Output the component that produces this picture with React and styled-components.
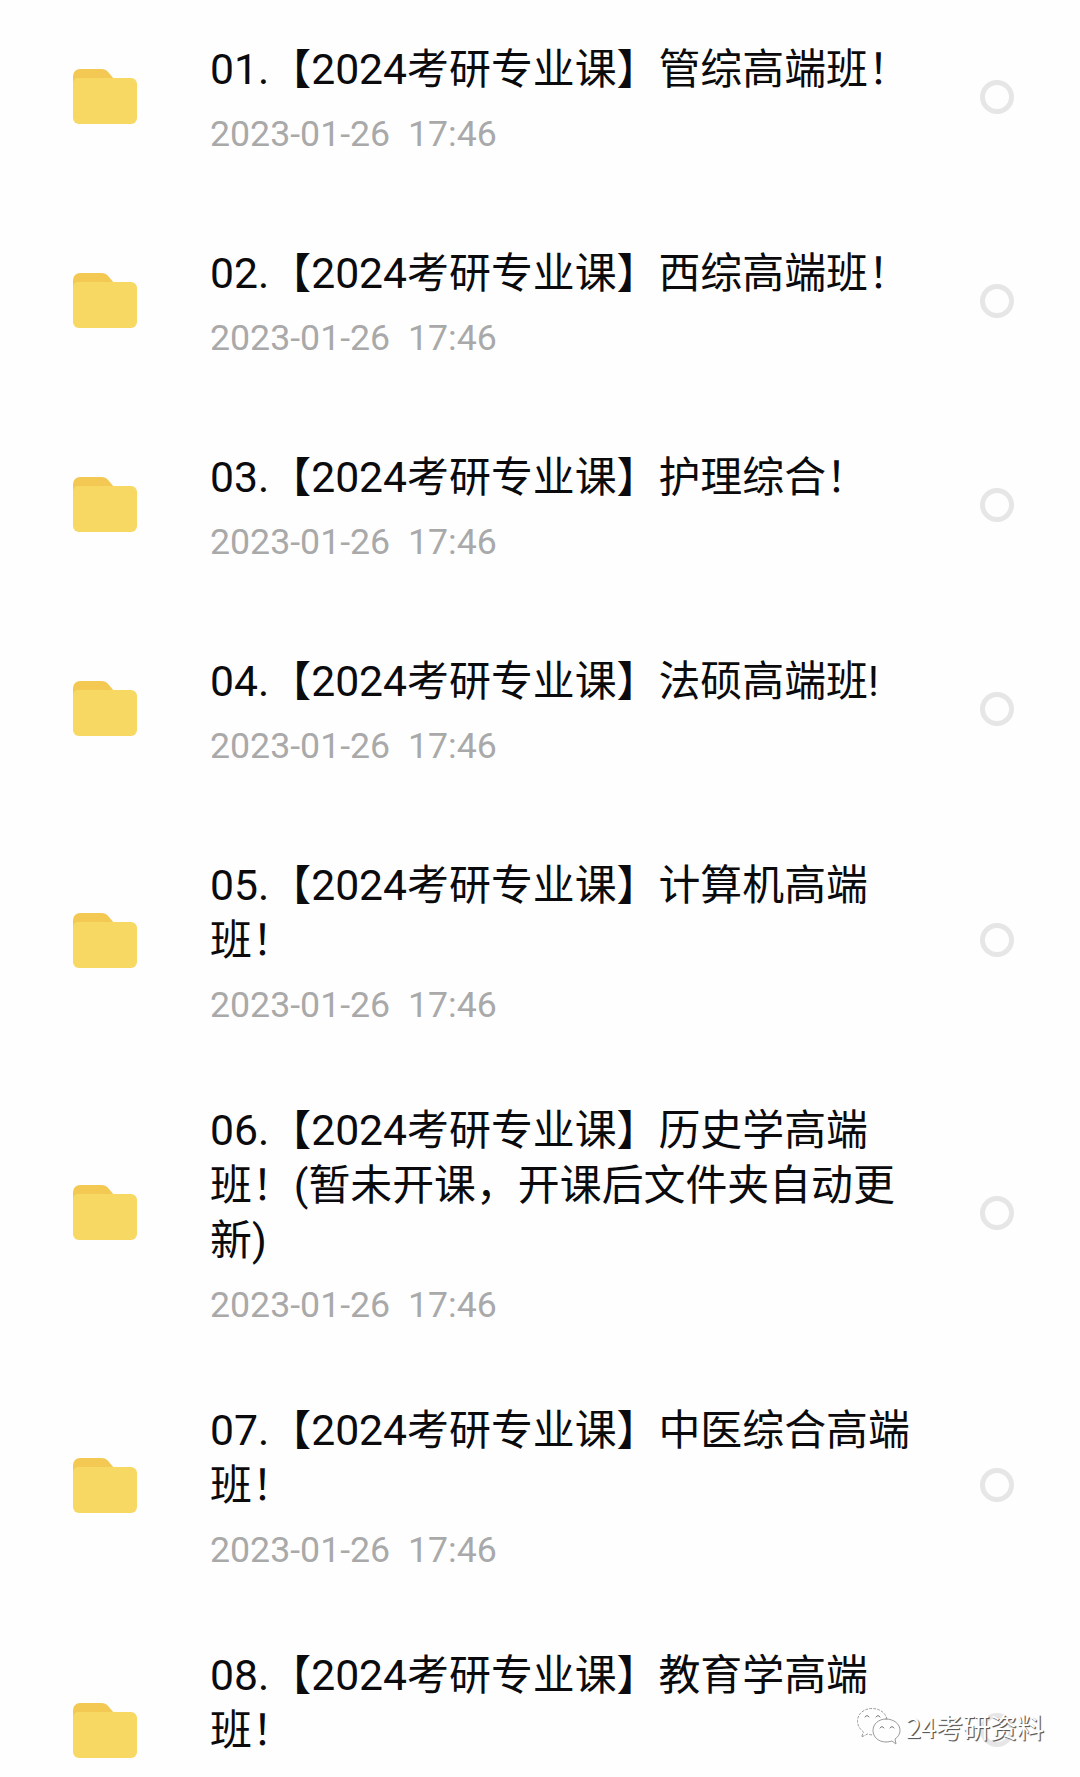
import React from "react";
import styled, { createGlobalStyle } from "styled-components";

const colors = {
  text: "#0b0b0d",
  grey: "#a9a9aa",
  ring: "#e6e6e6",
  folder: "#f7d862",
  folderTab: "#f3c954",
};

const GlobalStyle = createGlobalStyle`
  body {
    margin: 0;
    background: #fefefe;
    overflow: hidden;
  }
`;

const Page = styled.main`
  position: relative;
  box-sizing: border-box;
  width: 1080px;
  height: 1777px;
  padding-top: 42px;
  overflow: hidden;
  background: #fefefe;
  font-family: Roboto, "Noto Sans CJK SC", sans-serif;
`;

const List = styled.ul`
  margin: 0;
  padding: 0;
  list-style: none;
`;

const Item = styled.li`
  box-sizing: border-box;
  min-height: 204px;
  padding-bottom: 81px;
`;

const Row = styled.div`
  display: flex;
  align-items: center;
  padding: 0 66px 0 73px;
`;

const FolderSvg = styled.svg`
  flex: none;
  width: 64px;
  height: 55px;
  margin-right: 73px;
`;

const Info = styled.div`
  flex: 1;
`;

const Title = styled.div`
  color: ${colors.text};
  font-size: 41.9px;
  line-height: 55px;
  white-space: pre-line;
`;

// digits run slightly larger than the Chinese text
const Latin = styled.span`
  font-size: 42.7px;
  line-height: 1;
`;

const Time = styled.div`
  box-sizing: border-box;
  height: 54px;
  padding-top: 20px;
  color: ${colors.grey};
  font-size: 35.7px;
  line-height: 34px;
  white-space: pre;
`;

const Radio = styled.span`
  flex: none;
  box-sizing: border-box;
  width: 34px;
  height: 34px;
  border: 5px solid ${colors.ring};
  border-radius: 50%;
`;

const Watermark = styled.div`
  position: absolute;
  left: 856px;
  top: 1706px;
  display: flex;
  align-items: center;
  gap: 5px;
  height: 42px;
`;

const WatermarkText = styled.span`
  color: #fff;
  font-family: "Noto Sans CJK SC", sans-serif;
  font-size: 27px;
  line-height: 42px;
  white-space: nowrap;
  text-shadow: 1px 1px 1px #555, 1px 1px 0 #888;
`;

const Folder = () => (
  <FolderSvg viewBox="0 0 64 55">
    <path
      d="M0 7a7 7 0 0 1 7-7h21c4 0 6 1.500 8 4l5 6v12H0z"
      fill={colors.folderTab}
    />
    <path
      d="M0 14a5 5 0 0 1 5-5h53a6 6 0 0 1 6 6v34a6 6 0 0 1-6 6H6a6 6 0 0 1-6-6z"
      fill={colors.folder}
    />
  </FolderSvg>
);

const WechatIcon = () => (
  <svg width="45" height="40" viewBox="0 0 45 40" fill="none">
    <g stroke="#9a9a9a" strokeWidth="1" strokeLinecap="round">
      <path
        d="M31 12C29 5 23 1.500 16 1.500 8 1.500 1.500 7 1.500 14c0 5 3 8.500 6 11l-2 5 6-3c2 .6 4 1 6 1"
        strokeDasharray="2 2"
      />
      <path
        d="M30 12c-7.500 0-13 5-13 11.500S22.500 35 30 35c2 0 4-.4 6-1l4 3-1-5c3-2 5-5 5-8.500C44 17 38 12 30 12z"
        fill="#fefefe"
      />
      <path d="M9 10q2-3 4 0M20 10q2-3 4 0M24 21q2-3 4 0M34 21q2-3 4 0" stroke="#777" />
    </g>
  </svg>
);

const time = "2023-01-26  17:46";

const files = [
  { title: "01.【2024考研专业课】管综高端班！", time },
  { title: "02.【2024考研专业课】西综高端班！", time },
  { title: "03.【2024考研专业课】护理综合！", time },
  { title: "04.【2024考研专业课】法硕高端班!", time },
  { title: "05.【2024考研专业课】计算机高端\n班！", time },
  {
    title:
      "06.【2024考研专业课】历史学高端\n班！(暂未开课，开课后文件夹自动更\n新)",
    time,
  },
  { title: "07.【2024考研专业课】中医综合高端\n班！", time },
  { title: "08.【2024考研专业课】教育学高端\n班！" },
];

const FileItem = ({ title, time }) => (
  <Item>
    <Row>
      <Folder />
      <Info>
        <Title>
          {title
            .split(/([\d.()]+)/)
            .map((part, i) => (i % 2 ? <Latin key={i}>{part}</Latin> : part))}
        </Title>
        <Time>{time}</Time>
      </Info>
      <Radio />
    </Row>
  </Item>
);

export default function App() {
  return (
    <Page>
      <GlobalStyle />
      <List>
        {files.map(file => (
          <FileItem {...file} key={file.title} />
        ))}
      </List>
      <Watermark>
        <WechatIcon />
        <WatermarkText>24考研资料</WatermarkText>
      </Watermark>
    </Page>
  );
}
